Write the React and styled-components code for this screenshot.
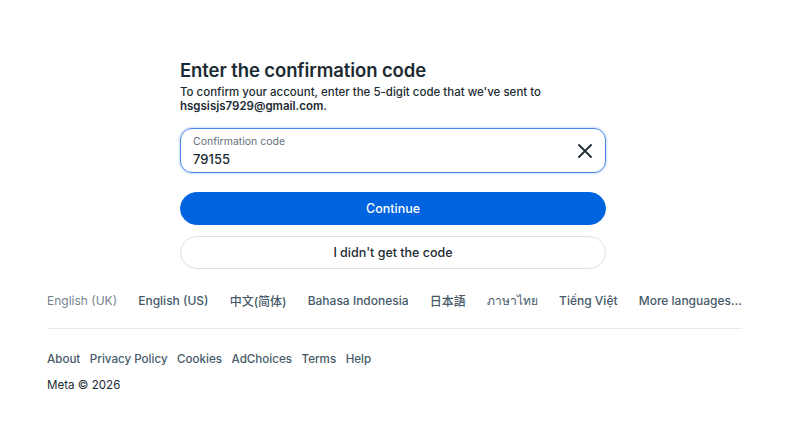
import React from "react";
import styled, { createGlobalStyle } from "styled-components";

const GlobalStyle = createGlobalStyle`
  html, body {
    margin: 0;
    padding: 0;
    background: #ffffff;
    font-family: Inter, "Noto Sans", "Noto Sans CJK SC", sans-serif;
    color: #1c2b33;
  }
`;

const languages = [
  { label: "English (UK)", current: true },
  { label: "English (US)" },
  { label: "中文(简体)" },
  { label: "Bahasa Indonesia" },
  { label: "日本語" },
  { label: "ภาษาไทย" },
  { label: "Tiếng Việt" },
  { label: "More languages…" },
];

const links = ["About", "Privacy Policy", "Cookies", "AdChoices", "Terms", "Help"];

function CloseIcon() {
  return (
    <svg width="14" height="14" viewBox="0 0 14 14" fill="none">
      <path d="M1 1L13 13M13 1L1 13" stroke="#1c2b33" strokeWidth="1.8" strokeLinecap="round" />
    </svg>
  );
}

function App() {
  return (
    <Page>
      <GlobalStyle />
      <Card>
        <Title>Enter the confirmation code</Title>
        <Subtitle>
          To confirm your account, enter the 5-digit code that we've sent to
          <br />
          <strong>hsgsisjs7929@gmail.com.</strong>
        </Subtitle>

        <InputBox>
          <InputText>
            <InputLabel>Confirmation code</InputLabel>
            <InputValue>79155</InputValue>
          </InputText>
          <ClearButton>
            <CloseIcon />
          </ClearButton>
        </InputBox>

        <Buttons>
          <Button primary>Continue</Button>
          <Button>I didn't get the code</Button>
        </Buttons>
      </Card>

      <Footer>
        <LangRow>
          {languages.map((l) => (
            <Lang key={l.label} current={l.current}>{l.label}</Lang>
          ))}
        </LangRow>
        <Divider />
        <LinkRow>
          {links.map((l) => (
            <FootLink key={l}>{l}</FootLink>
          ))}
        </LinkRow>
        <Copyright>Meta © 2026</Copyright>
      </Footer>
    </Page>
  );
}

const Page = styled.div`
  width: 786px;
  height: 423px;
  padding-top: 59px;
  box-sizing: border-box;
`;

const Card = styled.div`
  width: 426px;
  margin: 0 auto;
`;

const Title = styled.h1`
  margin: 0;
  font-size: 18.5px;
  font-weight: 600;
  line-height: 22px;
  color: #1c2b33;
  letter-spacing: -0.1px;
`;

const Subtitle = styled.p`
  margin: 4px 0 0;
  font-size: 11.5px;
  font-weight: 500;
  line-height: 14px;
  color: #1c2b33;

  > strong {
    font-weight: 600;
  }
`;

const InputBox = styled.div`
  margin-top: 15px;
  height: 45px;
  box-sizing: border-box;
  border: 1.5px solid #4a86e8;
  border-radius: 12px;
  box-shadow: 0 0 0 1.5px rgba(74, 134, 232, 0.18);
  display: flex;
  align-items: center;
  padding: 0 13px 0 12px;
`;

const InputText = styled.div`
  flex: 1;
  display: flex;
  flex-direction: column;
`;

const InputLabel = styled.span`
  font-size: 10.5px;
  line-height: 13px;
  color: #65717b;
`;

const InputValue = styled.span`
  margin-top: 4px;
  font-size: 13px;
  font-weight: 500;
  line-height: 15px;
  color: #1c2b33;
`;

const ClearButton = styled.div`
  display: flex;
  align-items: center;
  justify-content: center;
  margin-top: 1px;
`;

const Buttons = styled.div`
  margin-top: 19px;
  display: flex;
  flex-direction: column;
  gap: 11px;
`;

const Button = styled.div`
  height: 33px;
  box-sizing: border-box;
  border-radius: 999px;
  display: flex;
  align-items: center;
  justify-content: center;
  font-size: 12.5px;
  font-weight: 500;
  background: ${(p) => (p.primary ? "#0064e0" : "#ffffff")};
  color: ${(p) => (p.primary ? "#ffffff" : "#1c2b33")};
  border: 1px solid ${(p) => (p.primary ? "#0064e0" : "#dde1e5")};
`;

const Footer = styled.div`
  margin-top: 19px;
  padding: 0 44px 0 47px;
`;

const LangRow = styled.div`
  display: flex;
  justify-content: space-between;
  align-items: center;
  height: 24px;
`;

const Lang = styled.span`
  font-size: 12px;
  font-weight: ${(p) => (p.current ? 400 : 500)};
  color: ${(p) => (p.current ? "#75838f" : "#465a69")};
  white-space: nowrap;
`;

const Divider = styled.div`
  height: 1px;
  background: #e6eaee;
  margin-top: 16px;
`;

const LinkRow = styled.div`
  display: flex;
  gap: 9.5px;
  margin-top: 23px;
`;

const FootLink = styled.span`
  font-size: 11.6px;
  font-weight: 500;
  line-height: 15px;
  color: #465a69;
`;

const Copyright = styled.div`
  margin-top: 11px;
  font-size: 11.6px;
  line-height: 15px;
  color: #1c2b33;
`;

export default App;
